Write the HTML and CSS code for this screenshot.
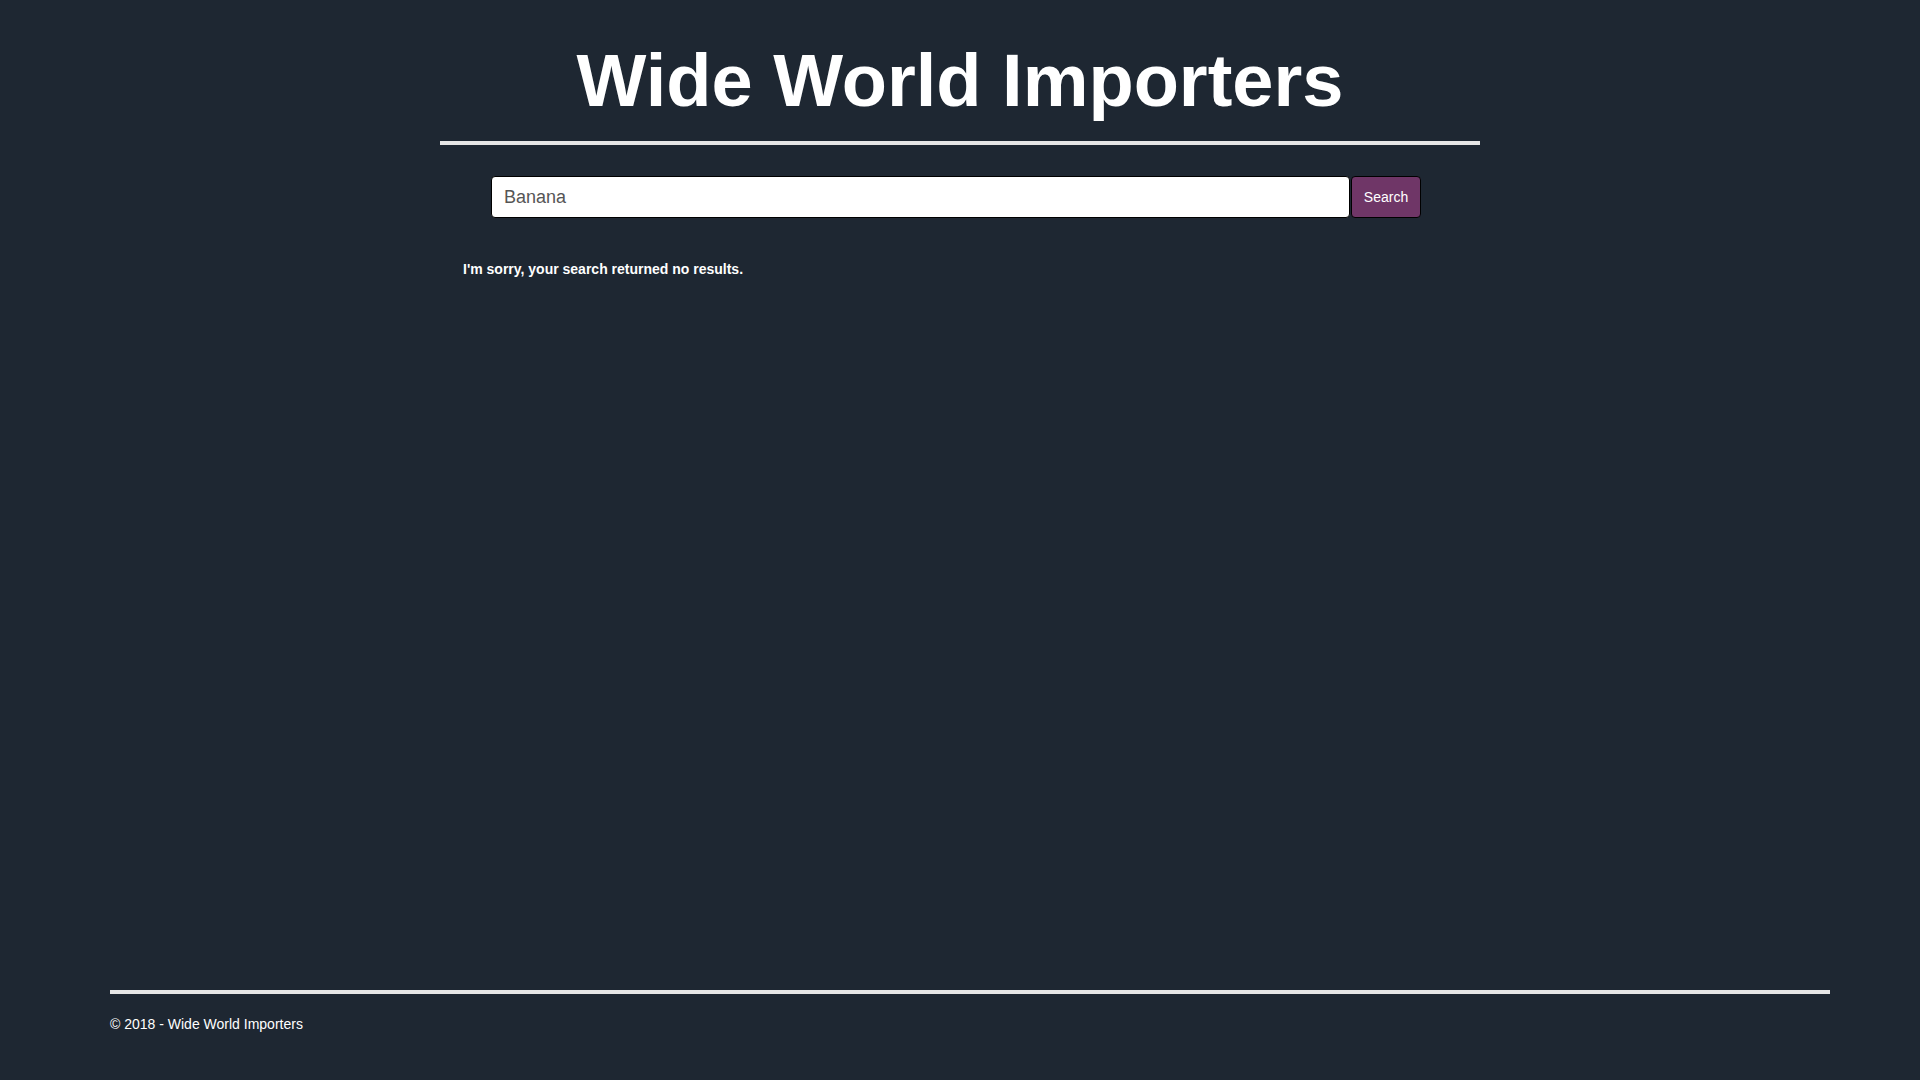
FILE: index.html
```html
<!DOCTYPE html>
<html lang="en">
<head>
<meta charset="utf-8">
<title>Wide World Importers</title>
<link rel="stylesheet" href="styles.css">
</head>
<body>
<div class="page">
  <main class="main">
    <header class="masthead">
      <h1 class="title">Wide World Importers</h1>
      <div class="rule"></div>
    </header>
    <section class="content">
      <form class="search" onsubmit="return false;">
        <input class="search-input" type="text" value="Banana">
        <button class="search-btn" type="submit">Search</button>
      </form>
      <p class="message">I'm sorry, your search returned no results.</p>
    </section>
  </main>
  <footer class="footer">
    <div class="rule"></div>
    <p class="copyright">&copy; 2018 - Wide World Importers</p>
  </footer>
</div>
</body>
</html>
```
FILE: styles.css
```css
html, body {
  margin: 0;
  padding: 0;
}
body {
  background: #1e2732;
  color: #ffffff;
  font-family: "Liberation Sans", Arial, Helvetica, sans-serif;
  font-size: 14px;
  line-height: 20px;
}
.page {
  min-height: 100vh;
  display: flex;
  flex-direction: column;
}
.main {
  flex: 1;
}
.masthead,
.content {
  width: 1040px;
  margin: 0 auto;
}
.masthead {
  padding-top: 38px;
}
.title {
  margin: 0;
  font-size: 74px;
  line-height: 85px;
  font-weight: bold;
  text-align: center;
  color: #ffffff;
}
.rule {
  height: 4px;
  background: #e6e6e6;
}
.masthead .rule {
  margin-top: 18px;
}
.search {
  display: flex;
  margin: 31px 0 0 0;
  padding-left: 51px;
}
.search-input {
  box-sizing: border-box;
  width: 859px;
  height: 42px;
  margin: 0;
  padding: 0 12px;
  border: 1px solid #000000;
  border-radius: 4px;
  background: #ffffff;
  color: #555555;
  font-family: "Liberation Sans", Arial, sans-serif;
  font-size: 18px;
  outline: none;
}
.search-btn {
  box-sizing: border-box;
  width: 70px;
  height: 42px;
  margin: 0 0 0 1px;
  padding: 0;
  border: 1px solid #000000;
  border-radius: 4px;
  background: #6f3667;
  color: #ffffff;
  font-family: "Liberation Sans", Arial, sans-serif;
  font-size: 14px;
  cursor: pointer;
}
.message {
  margin: 41px 0 0 23px;
  font-weight: bold;
  font-size: 14px;
  line-height: 20px;
}
.footer {
  padding: 0 90px 46px 110px;
}
.copyright {
  margin: 20px 0 0 0;
  font-size: 14px;
  line-height: 20px;
}
```
